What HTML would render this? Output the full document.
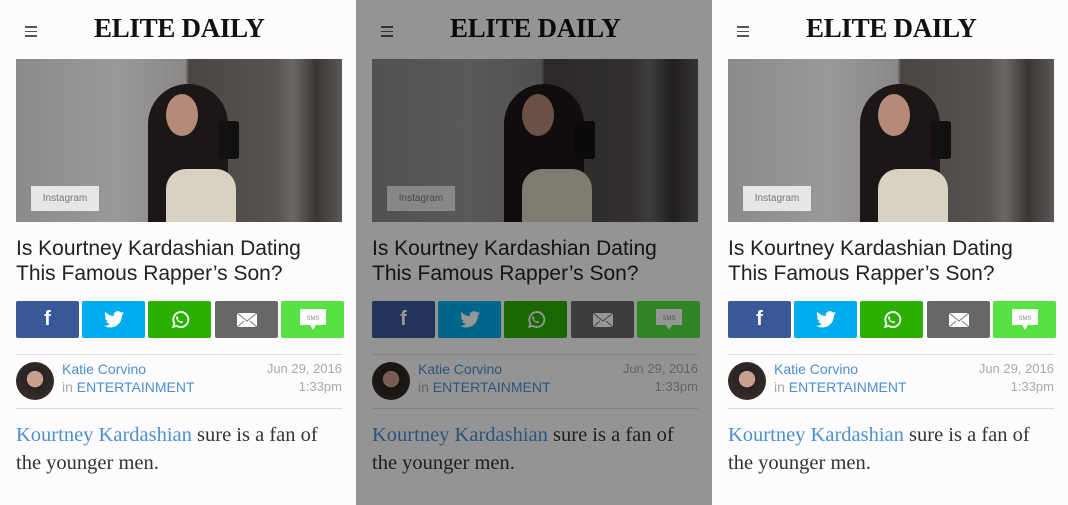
<!DOCTYPE html>
<html><head><meta charset="utf-8"><style>
*{margin:0;padding:0;box-sizing:border-box}
body{width:1068px;height:505px;background:#fdfbfd;position:relative;overflow:hidden;font-family:"Liberation Sans",sans-serif}
.p{position:absolute;top:0;width:356px;height:505px;background:#fdfbfd}
.menu{position:absolute;left:25px;top:26px;width:12px}
.menu i{display:block;height:1.5px;background:#555;margin-bottom:3px}
.logo{position:absolute;left:94px;top:13px;font-family:"Liberation Serif",serif;font-weight:bold;font-size:27px;color:#111;letter-spacing:-0.3px}
.img{position:absolute;left:16px;top:59px;width:326px;height:163px;overflow:hidden;
background:linear-gradient(90deg,#8c8a8c 0%,#9a9899 30%,#8a8889 52%,#4a4644 53%,#575351 80%,#6a6866 85%,#3a3634 92%,#5a5856 100%)}
.hair{position:absolute;left:132px;top:25px;width:80px;height:150px;background:#1c1716;border-radius:40px 40px 10px 10px}
.face{position:absolute;left:150px;top:35px;width:32px;height:42px;background:#b58a78;border-radius:50%}
.body{position:absolute;left:150px;top:110px;width:70px;height:60px;background:#d8d2c0;border-radius:20px 20px 0 0}
.phone{position:absolute;left:203px;top:62px;width:20px;height:38px;background:#111;border-radius:3px}
.tag{position:absolute;left:15px;top:127px;width:68px;height:25px;background:rgba(240,240,240,.9);font-size:10px;color:#777;text-align:center;line-height:25px}
.t{position:absolute;left:16px;top:236px;font-size:21px;line-height:25px;color:#222;font-family:"Liberation Sans",sans-serif}
.b{position:absolute;top:301px;height:37px;width:63px;border-radius:2px;display:flex;align-items:center;justify-content:center;color:#fff}
.hr{position:absolute;left:16px;width:326px;height:1px;background:#ddd}
.av{position:absolute;left:16px;top:362px;width:38px;height:38px;border-radius:50%;background:radial-gradient(circle at 50% 45%,#c9a090 0 28%,#2a2220 30%,#3a3330 100%)}
.au{position:absolute;left:62px;top:360px;font-size:14px;color:#4a90d0;line-height:18px}
.au span{color:#aaa}
.dt{position:absolute;right:14px;top:360px;font-size:13px;color:#aaa;text-align:right;line-height:18px}
.tx{position:absolute;left:16px;top:421px;font-family:"Liberation Serif",serif;font-size:20.5px;line-height:28px;color:#333}
.tx a{color:#4a90d0;text-decoration:none}
.ov{position:absolute;left:356px;top:0;width:356px;height:505px;background:rgba(0,0,0,.41)}
</style></head><body>
<div style="position:absolute;left:0;top:0;width:1px;height:505px;background:#ddd"></div>
<script>
var h='<div class="menu"><i></i><i></i><i></i></div><div class="logo">ELITE DAILY</div>'+
'<div class="img"><div class="hair"></div><div class="face"></div><div class="body"></div><div class="phone"></div><div class="tag">Instagram</div></div>'+
'<div class="t">Is Kourtney Kardashian Dating<br>This Famous Rapper’s Son?</div>'+
'<div class="b" style="left:16px;background:#3b5998;font:bold 20px \'Liberation Sans\'">f</div>'+
'<div class="b" style="left:82px;background:#00aced"><svg width="20" height="17" viewBox="0 0 24 20"><path fill="#fff" d="M24 2.4a10 10 0 0 1-2.8.8A5 5 0 0 0 23.3.4a10 10 0 0 1-3.1 1.2A4.9 4.9 0 0 0 11.8 6 14 14 0 0 1 1.7.9a4.9 4.9 0 0 0 1.5 6.6A4.900 4.9 0 0 1 1 6.900a4.9 4.9 0 0 0 3.9 4.8 5 5 0 0 1-2.2.1 4.9 4.9 0 0 0 4.600 3.4A9.900 9.9 0 0 1 0 17.300 14 14 0 0 0 7.500 19.500c9.100 0 14-7.500 14-14v-.6A10 10 0 0 0 24 2.400z"/></svg></div>'+
'<div class="b" style="left:148px;background:#2bb000"><svg width="20" height="20" viewBox="0 0 24 24"><path fill="none" stroke="#fff" stroke-width="2.2" d="M4 20l1.2-4A9 9 0 1 1 8 19z"/><path fill="#fff" d="M9 7.500c.5 0 .8 1.500 1 2 .1.500-.8 1-.6 1.400.6 1.200 1.600 2.200 2.800 2.800.4.200.9-.7 1.400-.6.500.2 2 .5 2 1 0 1-1 1.600-2 1.500-3-.3-6-3.300-6.300-6.300 0-1 .8-1.800 1.700-1.800z"/></svg></div>'+
'<div class="b" style="left:215px;background:#666866"><svg width="20" height="14" viewBox="0 0 20 14"><rect width="20" height="14" fill="#fff"/><path d="M0 0l10 8 10-8M0 14l7-6M20 14l-7-6" stroke="#777" fill="none"/></svg></div>'+
'<div class="b" style="left:281px;background:#55e242"><svg width="26" height="22" viewBox="0 0 26 22"><path fill="#fff" d="M0 0h26v16H16l-3 5-3-5H0z"/><text x="13" y="11" font-size="6" fill="#888" text-anchor="middle" font-family="Liberation Sans">SMS</text></svg></div>'+
'<div class="hr" style="top:354px"></div><div class="av"></div>'+
'<div class="au">Katie Corvino<br><span>in </span>ENTERTAINMENT</div><div class="dt">Jun 29, 2016<br>1:33pm</div>'+
'<div class="hr" style="top:408px"></div>'+
'<div class="tx"><a>Kourtney Kardashian</a> sure is a fan of<br>the younger men.</div>';
for(var i=0;i<3;i++){document.write('<div class="p" style="left:'+(i*356)+'px">'+h+'</div>');}
</script>
<div class="ov"></div>
</body></html>
